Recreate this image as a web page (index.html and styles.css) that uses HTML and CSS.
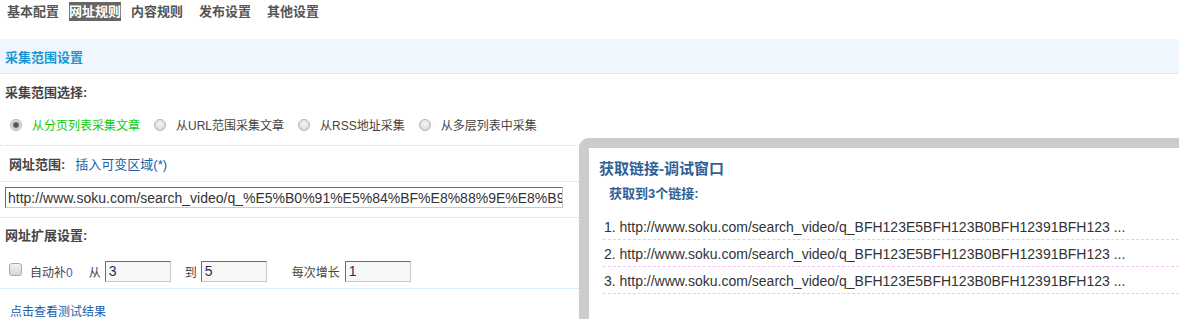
FILE: index.html
```html
<!DOCTYPE html>
<html lang="zh-CN">
<head>
<meta charset="utf-8">
<title>网址规则</title>
<link rel="stylesheet" href="styles.css">
</head>
<body>
<nav class="tabs">
  <span class="tab">基本配置</span>
  <span class="tab active">网址规则</span>
  <span class="tab">内容规则</span>
  <span class="tab">发布设置</span>
  <span class="tab">其他设置</span>
</nav>

<div class="band"><h2 class="band-title">采集范围设置</h2></div>

<div class="section-title">采集范围选择:</div>

<div class="row radios">
  <label class="opt"><input type="radio" name="mode" class="radio" checked><span class="opt-text on">从分页列表采集文章</span></label>
  <label class="opt"><input type="radio" name="mode" class="radio"><span class="opt-text">从URL范围采集文章</span></label>
  <label class="opt"><input type="radio" name="mode" class="radio"><span class="opt-text">从RSS地址采集</span></label>
  <label class="opt"><input type="radio" name="mode" class="radio"><span class="opt-text">从多层列表中采集</span></label>
</div>

<div class="row urlrange">
  <b class="label">网址范围:</b>
  <a class="link big" href="#">插入可变区域(*)</a>
</div>

<div class="row inputrow">
  <input class="url" type="text" value="http://www.soku.com/search_video/q_%E5%B0%91%E5%84%BF%E8%88%9E%E8%B9%88%E6%95%99">
</div>

<div class="section-title ext">网址扩展设置:</div>

<div class="row extrow">
  <input type="checkbox" class="check">
  <span class="t auto">自动补<em class="zero">0</em></span>
  <span class="t from">从</span>
  <input class="num" type="text" value="3">
  <span class="t to">到</span>
  <input class="num" type="text" value="5">
  <span class="t step">每次增长</span>
  <input class="num" type="text" value="1">
</div>

<div class="row linkrow">
  <a class="link" href="#">点击查看测试结果</a>
</div>

<div class="debug">
  <h3 class="debug-title">获取链接-调试窗口</h3>
  <div class="debug-sub">获取到3个链接:</div>
  <ol class="links">
    <li>1. http://www.soku.com/search_video/q_BFH123E5BFH123B0BFH12391BFH123 ...</li>
    <li>2. http://www.soku.com/search_video/q_BFH123E5BFH123B0BFH12391BFH123 ...</li>
    <li>3. http://www.soku.com/search_video/q_BFH123E5BFH123B0BFH12391BFH123 ...</li>
  </ol>
</div>
</body>
</html>
```

FILE: styles.css
```css
html, body {
  margin: 0;
  padding: 0;
  background: #fff;
}
body {
  position: relative;
  width: 1179px;
  height: 319px;
  overflow: hidden;
  font-family: "Liberation Sans", "Noto Sans CJK SC", sans-serif;
  font-size: 12px;
  color: #444;
}

/* tabs */
.tabs {
  display: flex;
  gap: 16px;
  padding: 2px 0 0 7px;
  height: 19px;
}
.tab {
  font-size: 13px;
  font-weight: bold;
  color: #555;
  line-height: 19px;
  height: 19px;
}
.tab.active {
  background: #666;
  color: #fff;
  margin: 0 -6px;
}

/* band */
.band {
  margin-top: 18px;
  height: 34px;
  background: #eff6fd;
  border-bottom: 1px dotted #c6e0f2;
  display: flex;
  align-items: center;
  padding-left: 5px;
}
.band-title {
  margin: 0;
  font-size: 13px;
  font-weight: bold;
  color: #1896d3;
}

.section-title {
  font-size: 13px;
  font-weight: bold;
  color: #444;
  height: 38px;
  line-height: 38px;
  padding-left: 5px;
}
.section-title.ext {
  height: 36px;
  line-height: 36px;
}

.row {
  display: flex;
  align-items: center;
  border-bottom: 1px dotted #c6e0f2;
  width: 590px;
}

/* radios */
.radios {
  height: 28px;
  padding: 0 0 5px 10px;
}
.opt {
  display: flex;
  align-items: center;
  margin-right: 14px;
}
.radio {
  appearance: none;
  -webkit-appearance: none;
  margin: -3px 10px 0 0;
  width: 12px;
  height: 12px;
  border-radius: 50%;
  border: 1px solid #b3b3b3;
  background: radial-gradient(circle at 50% 40%, #f6f6f6 0, #dcdcdc 70%, #cfcfcf 100%);
  box-sizing: border-box;
}
.radio:checked {
  background: radial-gradient(circle at 50% 50%, #4a4a4a 0, #5a5a5a 2px, #9a9a9a 3px, #e2e2e2 4px, #d2d2d2 100%);
}
.opt-text {
  font-size: 12px;
  color: #444;
  line-height: 18px;
}
.opt-text.on {
  color: #0ccc0c;
}

/* url range */
.urlrange {
  height: 35px;
  padding-left: 9px;
}
.label {
  font-size: 13px;
  font-weight: bold;
  color: #444;
  margin-right: 10px;
}
.link {
  color: #1a5ea8;
  text-decoration: none;
  font-size: 12px;
}
.link.big {
  font-size: 13px;
}

.inputrow {
  height: 35px;
  padding-left: 5px;
  align-items: flex-start;
}
.url {
  margin: 5px 0 0 0;
  width: 558px;
  height: 21px;
  box-sizing: border-box;
  border: 1px solid;
  border-color: #6e6e6e #c8c8c8 #c8c8c8 #6e6e6e;
  background: #fff;
  padding: 0 0 0 2px;
  font-family: "Liberation Sans", sans-serif;
  font-size: 14px;
  color: #333;
  outline: none;
}

/* extension row */
.extrow {
  height: 34px;
  padding-left: 9px;
}
.check {
  appearance: none;
  -webkit-appearance: none;
  margin: -4px 0 0 0;
  width: 13px;
  height: 13px;
  box-sizing: border-box;
  border: 1px solid #a8a8a8;
  border-radius: 3px;
  background: linear-gradient(#f2f2f2, #d6d6d6);
}
.t {
  font-size: 12px;
  color: #444;
}
.auto { margin-left: 8px; }
.zero { font-style: normal; color: #3e64a8; }
.from { margin-left: 16px; margin-right: 4px; }
.to { margin-left: 14px; margin-right: 4px; }
.step { margin-left: 25px; margin-right: 5px; }
.num {
  width: 66px;
  height: 21px;
  box-sizing: border-box;
  border: 1px solid;
  border-color: #6e6e6e #c8c8c8 #c8c8c8 #6e6e6e;
  background: #f7f7f7;
  padding: 0 0 0 3px;
  font-family: "Liberation Sans", sans-serif;
  font-size: 14px;
  color: #2b2b55;
  outline: none;
}

.linkrow {
  height: 30px;
  padding: 6px 0 0 10px;
  border-bottom: none;
}

/* debug window */
.debug {
  position: absolute;
  left: 579px;
  top: 138px;
  width: 600px;
  height: 181px;
  border: 10px solid #cccccc;
  border-right: 0;
  border-bottom: 0;
  border-radius: 10px 0 0 0;
  background: #fff;
  padding: 10px 0 0 10px;
  box-sizing: border-box;
}
.debug-title {
  margin: 0;
  font-size: 15px;
  font-weight: bold;
  color: #2f6096;
  line-height: 22px;
  height: 22px;
}
.debug-sub {
  margin: 4px 0 0 10px;
  font-size: 13px;
  font-weight: bold;
  color: #2f6096;
  line-height: 20px;
}
.links {
  list-style: none;
  margin: 9px 0 0 4px;
  padding: 0;
}
.links li {
  font-family: "Liberation Sans", sans-serif;
  font-size: 14px;
  color: #333;
  padding: 5px 0 3px 1px;
  line-height: 18px;
  border-bottom: 1px dashed #f6c4f4;
}
```
